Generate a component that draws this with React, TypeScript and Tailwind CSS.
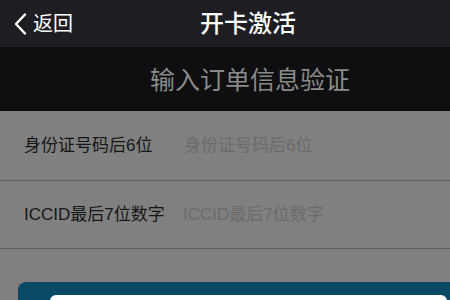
import React from 'react';

const font = { fontFamily: '"Liberation Sans", "Noto Sans CJK SC", sans-serif' };

export default function App() {
  return (
    <div className="w-[450px] h-[300px] overflow-hidden bg-[#808080]" style={font}>
      {/* Nav bar */}
      <div className="relative h-[47px] bg-[#1e1d22] flex items-center">
        <div className="flex items-center pl-[12px] text-white">
          <svg width="18" height="24" viewBox="0 0 18 24" className="mr-[3px]">
            <path d="M13 2.5 L4 12 L13 21.5" fill="none" stroke="#fff" strokeWidth="2.4" strokeLinecap="round" strokeLinejoin="round" />
          </svg>
          <span className="text-[20px] leading-none">返回</span>
        </div>
        <div className="absolute left-[200px] top-0 h-[47px] flex items-center text-white text-[24px] font-medium leading-none">
          开卡激活
        </div>
      </div>

      {/* Section header */}
      <div className="h-[64px] bg-[#0f0f11] flex items-center pl-[150px] text-[25px] leading-none text-[#8a8a8a] pt-[2px]">
        输入订单信息验证
      </div>

      {/* Form rows */}
      <div className="flex items-center h-[70px] border-b border-[#606060] pl-[24px] text-[17px] leading-none">
        <span className="w-[160px] text-[#161616]">身份证号码后6位</span>
        <span className="text-[#6b6b6b]">身份证号码后6位</span>
      </div>
      <div className="flex items-center h-[68px] border-b border-[#606060] pl-[24px] text-[17px] leading-none">
        <span className="w-[159px] text-[#161616]">ICCID最后7位数字</span>
        <span className="text-[#6b6b6b]">ICCID最后7位数字</span>
      </div>

      {/* Bottom card */}
      <div className="pt-[33px] pl-[18px]">
        <div className="h-[40px] bg-[#0b4a66] rounded-tl-[8px] pt-[13px] pl-[32px] pr-[3px]">
          <div className="h-full bg-white rounded-t-[6px]" />
        </div>
      </div>
    </div>
  );
}
